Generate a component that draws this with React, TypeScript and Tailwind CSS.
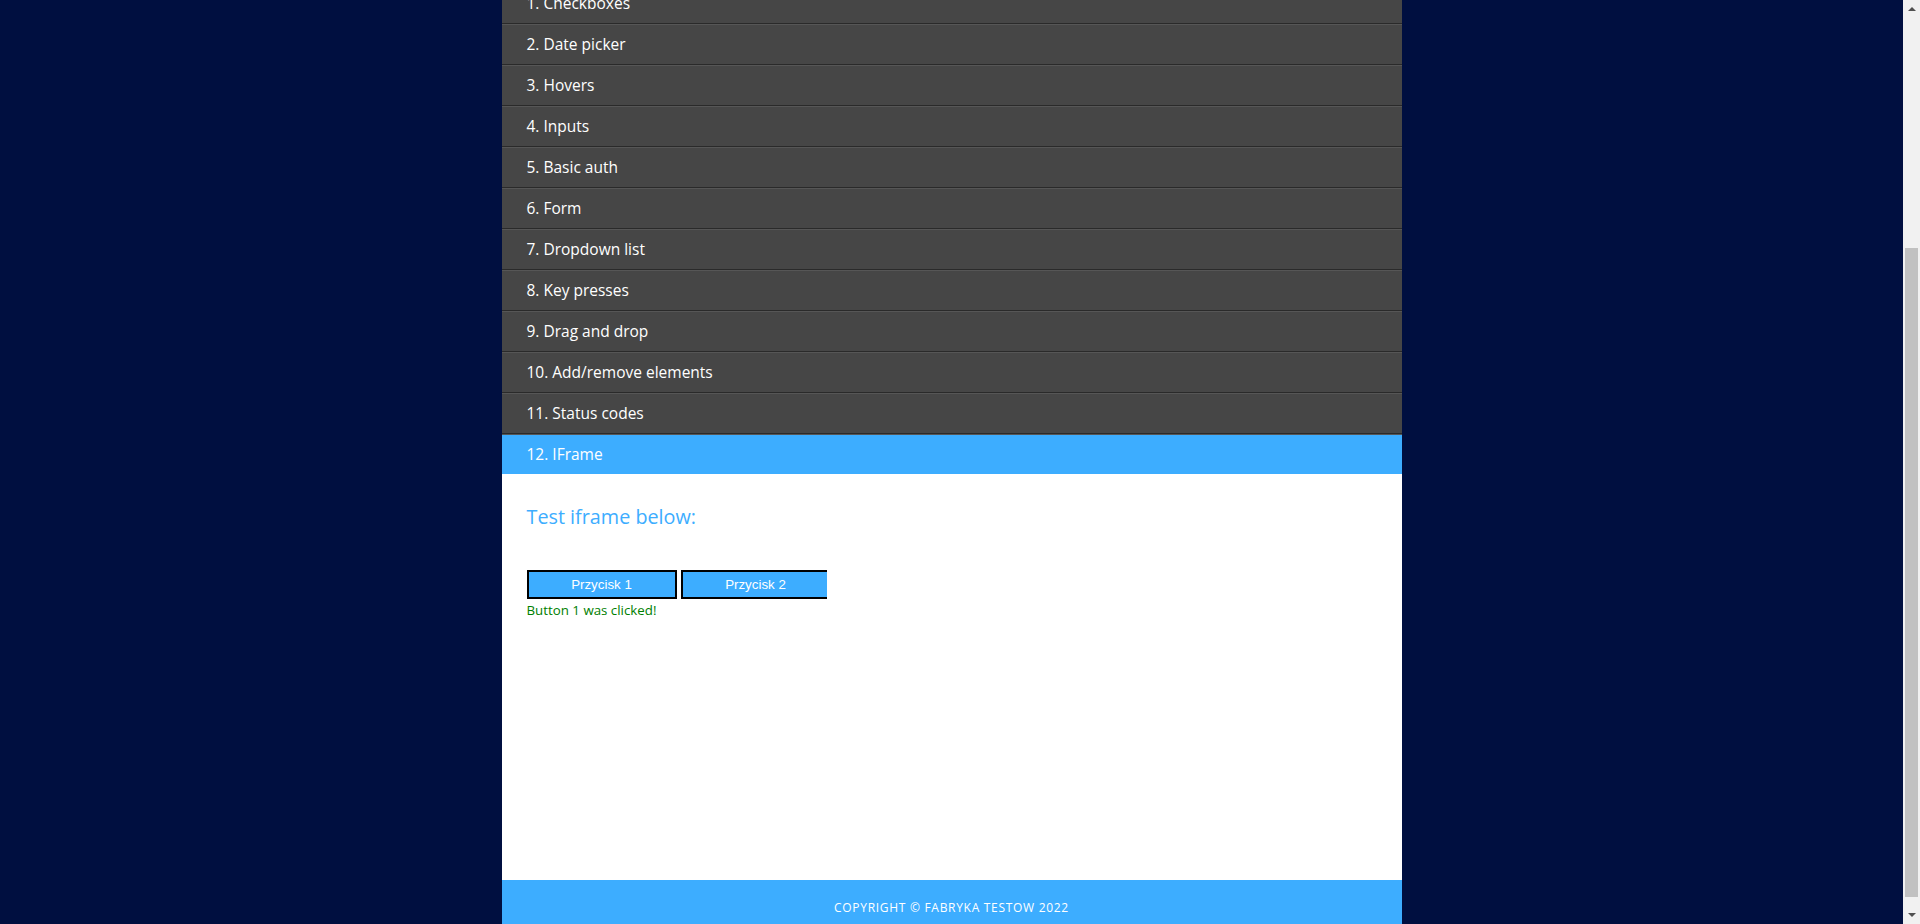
const items = [
  '1. Checkboxes',
  '2. Date picker',
  '3. Hovers',
  '4. Inputs',
  '5. Basic auth',
  '6. Form',
  '7. Dropdown list',
  '8. Key presses',
  '9. Drag and drop',
  '10. Add/remove elements',
  '11. Status codes',
  '12. IFrame',
]

const ACTIVE = '12. IFrame'

function IframeBox() {
  return (
    <div className="w-[300px] h-[150px] overflow-hidden bg-white">
      <div className="flex gap-[4px] w-[320px]">
        <button className="shrink-0 w-[150px] h-[29px] border-2 border-black bg-[#3dadff] text-white text-[13.33px] font-['Liberation_Sans',Arial,sans-serif]">
          Przycisk 1
        </button>
        <button className="shrink-0 w-[150px] h-[29px] border-2 border-black bg-[#3dadff] text-white text-[13.33px] font-['Liberation_Sans',Arial,sans-serif]">
          Przycisk 2
        </button>
      </div>
      <p className="mt-[2px] text-[13.3px] leading-[18px] text-[#008000]">Button 1 was clicked!</p>
    </div>
  )
}

// browser scrollbar, page is scrolled to the bottom
function Scrollbar() {
  return (
    <div className="w-[17px] h-full bg-[#f1f1f1] flex flex-col items-center">
      <div className="h-[17px] w-full flex items-center justify-center">
        <svg width="8" height="5" viewBox="0 0 8 5"><path d="M0 5 L4 1 L8 5 Z" fill="#505050" /></svg>
      </div>
      <div className="h-[231px]" />
      <div className="w-[13px] h-[649px] bg-[#c1c1c1]" />
      <div className="flex-1" />
      <div className="h-[17px] w-full flex items-center justify-center">
        <svg width="8" height="5" viewBox="0 0 8 5"><path d="M0 0 L4 4 L8 0 Z" fill="#505050" /></svg>
      </div>
    </div>
  )
}

export default function App() {
  return (
    <div className="h-[924px] flex bg-[#000f40] font-['Open_Sans',sans-serif] overflow-hidden">
      <div className="flex-1 h-full overflow-hidden flex flex-col justify-end items-center">
        <div className="w-[900px] shrink-0">
          <ul>
            {items.map(item =>
              item === ACTIVE ? (
                <li key={item} className="h-[40px] border-t border-[#565656] bg-[#3dadff] flex items-center pl-[25px] text-white text-[15.5px]">
                  {item}
                </li>
              ) : (
                <li key={item} className="h-[41px] border-t border-t-[#565656] border-b border-b-[#2a2a2a] bg-[#464646] flex items-center pl-[25px] text-white text-[15.5px]">
                  {item}
                </li>
              )
            )}
          </ul>

          <div className="bg-white h-[406px] px-[25px] pt-[31px]">
            <h2 className="text-[19.8px] leading-[24px] text-[#3dadff]">Test iframe below:</h2>
            <div className="mt-[41px]">
              <IframeBox />
            </div>
          </div>

          <footer className="bg-[#3dadff] h-[44px] pt-[20px] text-center">
            <p className="text-white text-[12px] leading-[16px] tracking-[0.7px] uppercase">Copyright © Fabryka Testow 2022</p>
          </footer>
        </div>
      </div>
      <Scrollbar />
    </div>
  )
}
